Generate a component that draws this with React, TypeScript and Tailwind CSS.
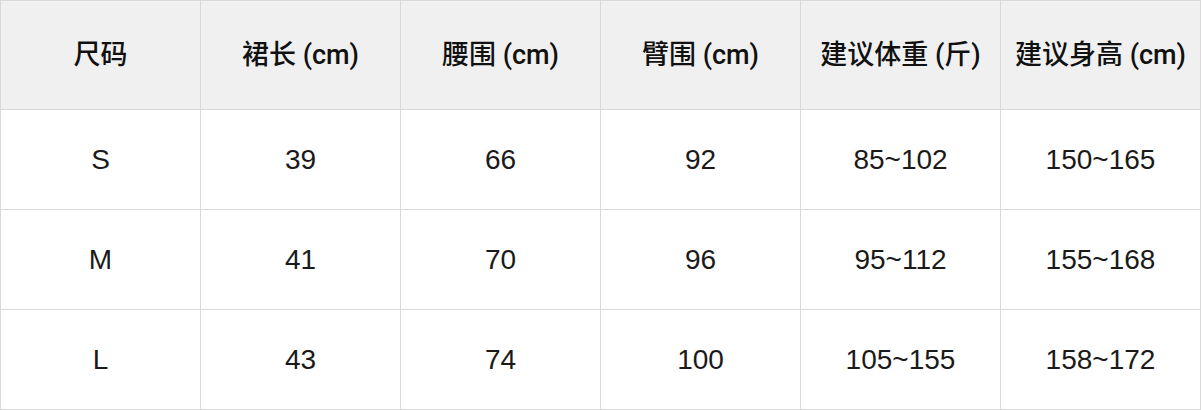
const headers = ['尺码', '裙长 (cm)', '腰围 (cm)', '臂围 (cm)', '建议体重 (斤)', '建议身高 (cm)']

const rows = [
  ['S', '39', '66', '92', '85~102', '150~165'],
  ['M', '41', '70', '96', '95~112', '155~168'],
  ['L', '43', '74', '100', '105~155', '158~172'],
]

export default function App() {
  return (
    <div
      className="w-[1201px] h-[410px] bg-white"
      style={{ fontFamily: '"Liberation Sans", Arial, "Noto Sans CJK SC", sans-serif' }}
    >
      <div className="grid grid-cols-[repeat(6,200px)] w-[1201px] border-l border-t border-[#d9d9d9]">
        {headers.map((h) => (
          <div
            key={h}
            className="h-[109px] flex items-center justify-center bg-[#f0f0f0] border-r border-b border-[#d9d9d9] text-[27px] font-medium text-[#111] whitespace-nowrap font-['Roboto','Noto_Sans_CJK_SC',sans-serif]"
          >
            {h}
          </div>
        ))}
        {rows.map((row) =>
          row.map((cell, i) => (
            <div
              key={row[0] + i}
              className="h-[100px] flex items-center justify-center border-r border-b border-[#d9d9d9] text-[28px] text-[#1a1a1a]"
            >
              {cell}
            </div>
          ))
        )}
      </div>
    </div>
  )
}
